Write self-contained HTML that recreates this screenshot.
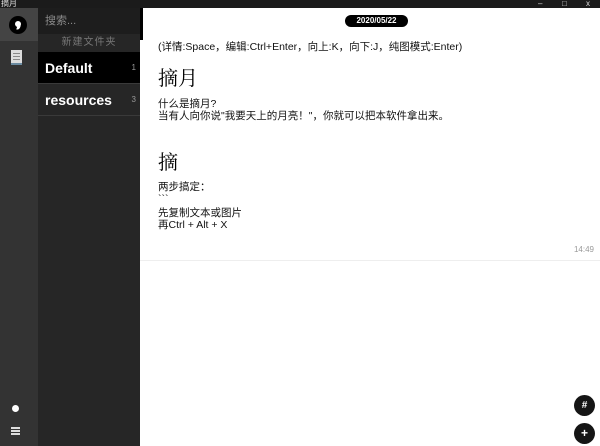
<!DOCTYPE html>
<html><head><meta charset="utf-8"><style>
*{margin:0;padding:0;box-sizing:border-box}
body{width:600px;height:446px;overflow:hidden;background:#fff;font-family:"Liberation Sans","Noto Sans CJK SC",sans-serif;position:relative}
.tb{position:absolute;left:0;top:0;width:600px;height:8px;background:#1b1b1b;color:#ddd;font-size:8px;line-height:7px;padding-left:1px}
.ib{position:absolute;left:0;top:8px;width:38px;height:438px;background:#333}
.ib .act{position:absolute;left:0;top:0;width:38px;height:33px;background:#444}
.fp{position:absolute;left:38px;top:8px;width:102px;height:438px;background:#262626}
.search{height:26px;background:#1d1d1d;color:#8a8a8a;font-size:11px;line-height:26px;padding-left:7px}
.nf{height:18px;color:#777;font-size:10px;line-height:18px;text-align:center;letter-spacing:1px}
.fi{height:32px;color:#fff;font-weight:bold;font-size:14px;line-height:32px;padding-left:7px;position:relative;border-bottom:1px solid #3a3a3a}
.fi span{position:absolute;right:4px;top:0;font-size:8px;color:#999;font-weight:normal}
.main{position:absolute;left:140px;top:8px;width:460px;height:438px;background:#fff}
.pill{position:absolute;left:205px;top:7px;width:63px;height:12px;border-radius:6px;background:#000;color:#fff;font-size:8px;font-weight:bold;text-align:center;line-height:12px}
.c{position:absolute;left:18px;color:#111;font-size:10.5px;line-height:12px}
h1{position:absolute;left:18px;font-family:"Liberation Serif","Noto Serif CJK SC",serif;font-weight:normal;font-size:20px;color:#000}
.btn{position:absolute;left:434px;width:21px;height:21px;border-radius:50%;background:#151515;color:#fff;text-align:center;line-height:21px;font-size:12px;font-weight:bold}
</style></head><body>
<div class="tb">摘月<span style="position:absolute;left:538px">–</span><span style="position:absolute;left:562px">□</span><span style="position:absolute;left:586px">x</span></div>
<div class="ib"><div class="act"></div>
<div style="position:absolute;left:9px;top:8px;width:18px;height:18px;border-radius:50%;background:#000"><div style="position:absolute;left:6px;top:5px;width:6px;height:6px;border-radius:50%;background:#fff"></div><div style="position:absolute;left:8px;top:9px;width:3px;height:5px;background:#fff;border-radius:0 0 3px 0;transform:rotate(20deg)"></div></div>
<div style="position:absolute;left:11px;top:42px;width:11px;height:15px;background:#ddd;border-bottom:2px solid #6a8aa0"><div style="margin:3px 2px;height:1px;background:#888;box-shadow:0 3px #888,0 6px #888"></div></div>
<div style="position:absolute;left:12px;top:397px;width:7px;height:7px;border-radius:50%;background:#fff"></div>
<div style="position:absolute;left:11px;top:419px;width:9px;height:2px;background:#ddd;box-shadow:0 3px #ddd,0 6px #ddd"></div>
</div>
<div class="fp"><div class="search">搜索...</div><div class="nf">新建文件夹</div>
<div class="fi" style="background:#000">Default<span>1</span></div>
<div class="fi">resources<span>3</span></div></div>
<div class="main">
<div style="position:absolute;left:0;top:0;width:3px;height:32px;background:#000"></div>
<div class="pill">2020/05/22</div>
<div class="c" style="top:33px">(详情:Space，编辑:Ctrl+Enter，向上:K，向下:J，纯图模式:Enter)</div>
<h1 style="top:54px">摘月</h1>
<div class="c" style="top:90px">什么是摘月?<br>当有人向你说"我要天上的月亮！"，你就可以把本软件拿出来。</div>
<h1 style="top:138px">摘</h1>
<div class="c" style="top:173px">两步搞定：<br>&#96;&#96;&#96;</div>
<div class="c" style="top:199px">先复制文本或图片<br>再Ctrl + Alt + X</div>
<div style="position:absolute;right:6px;top:237px;font-size:8px;color:#999">14:49</div>
<div style="position:absolute;left:0;top:252px;width:460px;height:1px;background:#eee"></div>
<div class="btn" style="top:387px;font-size:10px">#</div>
<div class="btn" style="top:415px">+</div>
</div>
</body></html>
